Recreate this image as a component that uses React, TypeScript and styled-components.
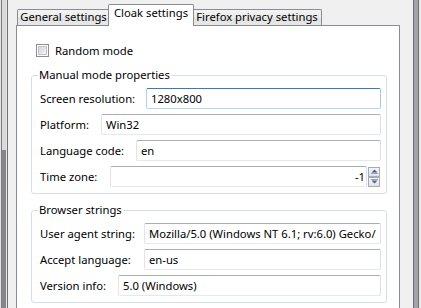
import React from 'react';
import styled, { createGlobalStyle, css } from 'styled-components';

const GlobalStyle = createGlobalStyle`
  html, body {
    margin: 0;
    padding: 0;
    height: 100%;
    overflow: hidden;
    background: #f0f0f0;
  }
  body {
    font-family: "Noto Sans", "Segoe UI", Arial, sans-serif;
    font-size: 11.25px;
    color: #000;
  }
  #root {
    height: 100%;
  }
`;

const Window = styled.div`
  display: flex;
  height: 100%;
  overflow: hidden;
`;

const LeftEdge = styled.div`
  width: 8px;
  flex-shrink: 0;
  display: flex;
  flex-direction: column;
`;

const EdgeTrack = styled.div<{ $thumb?: boolean }>`
  height: ${p => (p.$thumb ? 'auto' : '150px')};
  flex: ${p => (p.$thumb ? 1 : 'none')};
  background: linear-gradient(
    to right,
    #e2e2e2 0 1px,
    #7d7d7d 1px 2px,
    ${p => (p.$thumb ? '#85858c' : '#d9d9d9')} 2px 6px,
    #e4e4e4 6px 7px,
    #727272 7px 8px
  );
`;

const RightEdge = styled.div`
  width: 8px;
  flex-shrink: 0;
  background: linear-gradient(
    to right,
    #6f6f6f 0 1px,
    #a3a3a9 1px 5px,
    #6f6f6f 5px 6px,
    #e9e9e9 6px 8px
  );
`;

const Main = styled.div`
  flex: 1;
  min-width: 0;
  display: flex;
  flex-direction: column;
  padding: 4px 13px 0 8px;
  background: #f0f0f0;
`;

const TabStrip = styled.div`
  display: flex;
  align-items: flex-end;
  height: 21px;
  padding-left: 1px;
`;

const Tab = styled.div<{ $w: number; $selected?: boolean }>`
  width: ${p => p.$w}px;
  height: 16px;
  box-sizing: border-box;
  flex-shrink: 0;
  border: 1px solid #898c95;
  border-bottom: none;
  border-radius: 2px 2px 0 0;
  background: linear-gradient(#f3f3f3, #ebebeb 50%, #e2e2e2 51%, #e7e7e7);
  display: flex;
  align-items: center;
  justify-content: center;
  padding-bottom: 2px;
  white-space: nowrap;
  line-height: 14px;

  ${p =>
    p.$selected &&
    css`
      height: 22px;
      margin: 0 -2px -1px;
      padding-bottom: 5px;
      background: #fff;
      position: relative;
      z-index: 1;
    `}
`;

const Panel = styled.div`
  border: 1px solid #898c95;
  background: #fff;
  padding: 18px 12px 30px 14px;
`;

const CheckRow = styled.label`
  display: flex;
  align-items: center;
  gap: 6px;
  height: 13px;
  margin: 0 0 10px 5px;
`;

const CheckBox = styled.span`
  width: 13px;
  height: 13px;
  box-sizing: border-box;
  border: 1px solid #8f8f8f;
  background: #fff;
  padding: 1px;
  display: flex;

  &::after {
    content: '';
    flex: 1;
    border: 1px solid #c2c5ca;
    background: linear-gradient(135deg, #d2d5da, #f4f4f5);
  }
`;

const Group = styled.fieldset<{ $gapTop?: number }>`
  margin: ${p => p.$gapTop ?? 0}px 0 0;
  border: 1px solid #d5dfe5;
  border-radius: 3px;
  padding: 5px 5px 6px 8px;
  min-width: 0;
  display: flex;
  flex-direction: column;
  gap: 5px;
`;

const Legend = styled.legend`
  padding: 0 1px;
  margin-left: -2px;
  line-height: 16px;
`;

const Row = styled.div`
  display: flex;
  align-items: center;
  height: 21px;
`;

const Label = styled.span<{ $w: number }>`
  width: ${p => p.$w}px;
  flex-shrink: 0;
  white-space: nowrap;
`;

const TextBox = styled.input<{ $focused?: boolean; $right?: boolean }>`
  flex: 1;
  min-width: 0;
  height: 21px;
  box-sizing: border-box;
  margin: 0;
  border: 1px solid;
  border-color: #abadb3 #dbdfe6 #e3e9ef #e2e3ea;
  border-radius: 2px;
  padding: 0 4px;
  font: inherit;
  color: #000;
  background: #fff;
  outline: none;
  text-align: ${p => (p.$right ? 'right' : 'left')};
  ${p => p.$right && css`padding-right: 1px;`}

  ${p =>
    p.$focused &&
    css`
      border-color: #3d7bad #a4c9e3 #b7d9ed #b5cfe7;
    `}
`;

const NumberBox = styled.div`
  flex: 1;
  min-width: 0;
  display: flex;
  align-items: center;
`;

const Spinner = styled.div`
  width: 12px;
  margin: 0 1px;
  display: flex;
  flex-direction: column;
`;

const SpinButton = styled.div`
  height: 10px;
  box-sizing: border-box;
  border: 1px solid #a9abb0;
  background: linear-gradient(#f5f5f5, #e3e3e3);
  display: flex;
  align-items: center;
  justify-content: center;
`;

const Arrow = ({ down }: { down?: boolean }) => (
  <svg width="7" height="5" viewBox="0 0 7 5">
    {down ? (
      <>
        <rect x="0" y="0" width="7" height="1" fill="#8ea3cc" />
        <polygon points="0.5,1.5 6.5,1.5 3.5,4.5" fill="#3f5fa8" />
      </>
    ) : (
      <>
        <polygon points="3.5,0.5 6.5,3.5 0.5,3.5" fill="#3f5fa8" />
        <rect x="0" y="4" width="7" height="1" fill="#8ea3cc" />
      </>
    )}
  </svg>
);

const manualRows = [
  { label: 'Screen resolution:', w: 106, value: '1280x800', focused: true },
  { label: 'Platform:', w: 61, value: 'Win32' },
  { label: 'Language code:', w: 96, value: 'en' },
];

const browserRows = [
  {
    label: 'User agent string:',
    w: 104,
    value: 'Mozilla/5.0 (Windows NT 6.1; rv:6.0) Gecko/20100101 Firefox/6.0',
  },
  { label: 'Accept language:', w: 104, value: 'en-us' },
  { label: 'Version info:', w: 78, value: '5.0 (Windows)' },
];

const App = () => {
  return (
    <>
      <GlobalStyle />
      <Window>
        <LeftEdge>
          <EdgeTrack />
          <EdgeTrack $thumb />
        </LeftEdge>
        <Main>
          <TabStrip>
            <Tab $w={93}>General settings</Tab>
            <Tab $w={86} $selected>
              Cloak settings
            </Tab>
            <Tab $w={130}>Firefox privacy settings</Tab>
          </TabStrip>
          <Panel>
            <CheckRow>
              <CheckBox />
              <span>Random mode</span>
            </CheckRow>

            <Group>
              <Legend>Manual mode properties</Legend>
              {manualRows.map(row => (
                <Row key={row.label}>
                  <Label $w={row.w}>{row.label}</Label>
                  <TextBox $focused={row.focused} defaultValue={row.value} readOnly />
                </Row>
              ))}
              <Row>
                <Label $w={70}>Time zone:</Label>
                <NumberBox>
                  <TextBox $right defaultValue="-1" readOnly />
                  <Spinner>
                    <SpinButton>
                      <Arrow />
                    </SpinButton>
                    <SpinButton>
                      <Arrow down />
                    </SpinButton>
                  </Spinner>
                </NumberBox>
              </Row>
            </Group>

            <Group $gapTop={8}>
              <Legend>Browser strings</Legend>
              {browserRows.map(row => (
                <Row key={row.label}>
                  <Label $w={row.w}>{row.label}</Label>
                  <TextBox defaultValue={row.value} readOnly />
                </Row>
              ))}
            </Group>
          </Panel>
        </Main>
        <RightEdge />
      </Window>
    </>
  );
};

export default App;
